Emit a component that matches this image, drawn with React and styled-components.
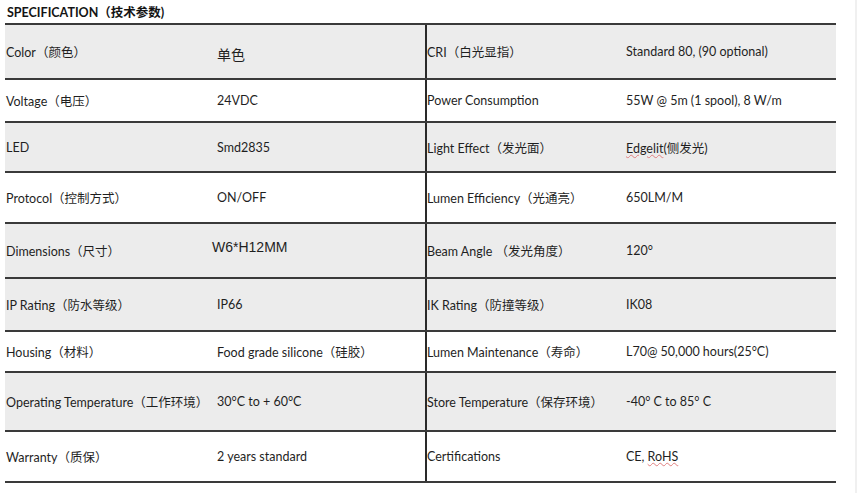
import React from "react";
import styled, { createGlobalStyle } from "styled-components";

const GlobalStyle = createGlobalStyle`
  html, body {
    margin: 0;
    padding: 0;
    background: #ffffff;
  }
  body {
    font-family: Lato, "Noto Sans CJK SC", sans-serif;
    color: #1f1f1f;
  }
`;

const rows = [
  { h: 55, gray: true, l1: "Color（颜色）", v1: "单色", big1: true, l2: "CRI（白光显指）", v2: "Standard 80, (90 optional)" },
  { h: 43, gray: false, l1: "Voltage（电压）", v1: "24VDC", l2: "Power Consumption", v2: "55W @ 5m (1 spool), 8 W/m" },
  { h: 50, gray: true, l1: "LED", v1: "Smd2835", l2: "Light Effect（发光面）", v2: "Edgelit", v2b: "(侧发光)", wavy2: true },
  { h: 51, gray: false, l1: "Protocol（控制方式）", v1: "ON/OFF", l2: "Lumen Efficiency（光通亮）", v2: "650LM/M" },
  { h: 55, gray: true, l1: "Dimensions（尺寸）", v1: "W6*H12MM", big1: true, up1: true, l2: "Beam Angle （发光角度）", v2: "120°" },
  { h: 53, gray: true, l1: "IP Rating（防水等级）", v1: "IP66", l2: "IK Rating（防撞等级）", v2: "IK08" },
  { h: 41, gray: false, l1: "Housing（材料）", v1: "Food grade silicone（硅胶）", l2: "Lumen Maintenance（寿命）", v2: "L70@ 50,000 hours(25°C)" },
  { h: 59, gray: true, l1: "Operating Temperature（工作环境）", v1: "30°C to + 60°C", l2: "Store Temperature（保存环境）", v2: "-40° C to 85° C" },
  { h: 51, gray: false, l1: "Warranty（质保）", v1: "2 years standard", l2: "Certifications", v2: "CE, ", v2b: "RoHS", wavy2: true },
];

function App() {
  return (
    <Page>
      <GlobalStyle />
      <Title>SPECIFICATION（技术参数)</Title>
      <Table>
        {rows.map((r, i) => (
          <Row key={i} $h={r.h} $gray={r.gray}>
            <Label>{r.l1}</Label>
            <Value $big={r.big1} $up={r.up1}>{r.v1}</Value>
            <Label $right>{r.l2}</Label>
            <Value>
              {r.wavy2 && r.v2 === "Edgelit" ? (
                <>
                  <Wavy>{r.v2}</Wavy>
                  {r.v2b}
                </>
              ) : r.wavy2 ? (
                <>
                  {r.v2}
                  <Wavy>{r.v2b}</Wavy>
                </>
              ) : (
                r.v2
              )}
            </Value>
          </Row>
        ))}
      </Table>
    </Page>
  );
}

const Page = styled.div`
  width: 857px;
  height: 493px;
  box-sizing: border-box;
  padding: 4px 0 0 5px;
  border-right: 2px solid #f0f0f0;
  overflow: hidden;
`;

const Title = styled.div`
  font-weight: bold;
  font-size: 12.5px;
  color: #141414;
  height: 19px;
  line-height: 17px;
  padding-left: 2px;
`;

const Table = styled.div`
  width: 831px;
  border-top: 2px solid #3a3a3a;
`;

const Row = styled.div`
  display: grid;
  grid-template-columns: 212px 208px 201px 210px;
  height: ${(p) => p.$h}px;
  box-sizing: border-box;
  border-bottom: 2px solid #3a3a3a;
  background: ${(p) => (p.$gray ? "#ececec" : "#ffffff")};
  align-items: center;
`;

const Label = styled.div`
  font-size: 12.5px;
  white-space: nowrap;
  padding-left: ${(p) => (p.$right ? "0" : "1px")};
  height: 100%;
  display: flex;
  align-items: center;
  box-sizing: border-box;
  border-left: ${(p) => (p.$right ? "2px solid #2a2a2a" : "none")};
`;

const Value = styled.div`
  font-size: ${(p) => (p.$big ? "14px" : "12.5px")};
  font-family: ${(p) => (p.$big ? '"Liberation Sans", "Noto Sans CJK SC", sans-serif' : "inherit")};
  white-space: nowrap;
  margin-left: ${(p) => (p.$up ? "-5px" : "0")};
  transform: translateY(${(p) => (p.$up ? "-4px" : p.$big ? "2px" : "0")});
`;

const Wavy = styled.span`
  text-decoration: underline wavy #e08080;
  text-decoration-thickness: 1px;
  text-underline-offset: 1px;
`;

export default App;
